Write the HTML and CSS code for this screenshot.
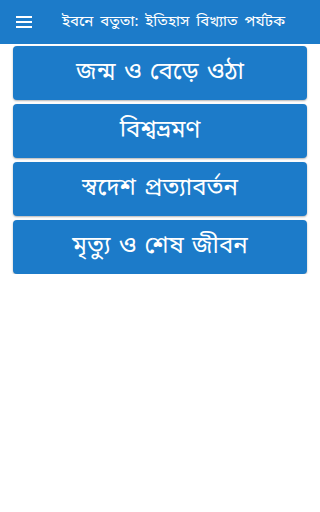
FILE: index.html
```html
<!DOCTYPE html>
<html lang="bn">
<head>
<meta charset="utf-8">
<title>ইবনে বতুতা</title>
<link rel="stylesheet" href="styles.css">
</head>
<body>
<header class="appbar">
  <button class="menu-btn" aria-label="menu">
    <svg width="16" height="12" viewBox="0 0 16 12"><rect x="0" y="0" width="16" height="2" fill="#fff"/><rect x="0" y="5" width="16" height="2" fill="#fff"/><rect x="0" y="10" width="16" height="2" fill="#fff"/></svg>
  </button>
  <h1 class="title">ইবনে বতুতা: ইতিহাস বিখ্যাত পর্যটক</h1>
</header>
<main class="list">
  <a class="card">জন্ম ও বেড়ে ওঠা</a>
  <a class="card">বিশ্বভ্রমণ</a>
  <a class="card">স্বদেশ প্রত্যাবর্তন</a>
  <a class="card">মৃত্যু ও শেষ জীবন</a>
</main>
</body>
</html>
```
FILE: styles.css
```css
html, body {
  margin: 0;
  padding: 0;
  background: #fff;
  font-family: "Noto Sans Bengali", "Noto Sans", sans-serif;
}
.appbar {
  height: 44px;
  background: #1c7bc9;
  display: flex;
  align-items: center;
  color: #fff;
}
.menu-btn {
  background: none;
  border: 0;
  padding: 0;
  margin-left: 16px;
  width: 16px;
  height: 12px;
  display: flex;
}
.title {
  margin: 0 0 0 30px;
  font-size: 15px;
  font-weight: normal;
  word-spacing: 3px;
  white-space: nowrap;
}
.list {
  display: flex;
  flex-direction: column;
  gap: 4px;
  padding: 2px 13px 0;
}
.card {
  height: 54px;
  background: #1c7bc9;
  border-radius: 4px;
  box-shadow: 0 1px 2px rgba(0,0,0,0.3);
  color: #fff;
  display: flex;
  align-items: center;
  justify-content: center;
  font-size: 24px;
  word-spacing: 2px;
}
```
